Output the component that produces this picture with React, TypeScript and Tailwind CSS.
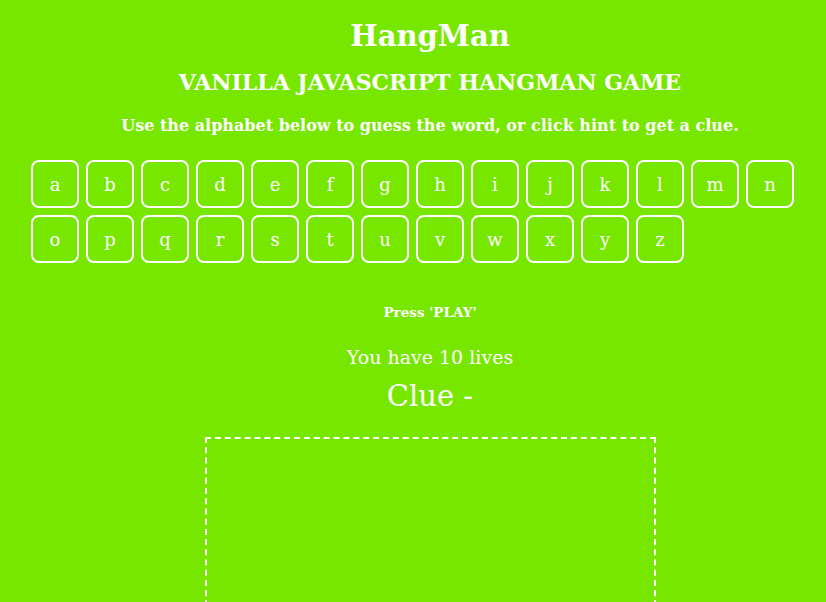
const letters = "abcdefghijklmnopqrstuvwxyz".split("");

export default function App() {
  return (
    <div className="min-h-[602px] h-[602px] overflow-hidden bg-[#78e700] text-white font-['DejaVu_Serif',serif]">
      <div className="pl-[34px] text-center">
        <h1 className="pt-[16px] text-[29px] leading-[40px] font-bold">HangMan</h1>
        <h2 className="mt-[11px] text-[22px] leading-[30px] font-bold">VANILLA JAVASCRIPT HANGMAN GAME</h2>
        <p className="mt-[18px] text-[16px] leading-[22px] font-bold">
          Use the alphabet below to guess the word, or click hint to get a clue.
        </p>
      </div>

      <ul className="mt-[23px] ml-[31px] flex w-[780px] flex-wrap gap-[7px]">
        {letters.map((l) => (
          <li
            key={l}
            className="flex h-[48px] w-[48px] list-none items-center justify-center rounded-[8px] border-2 border-white text-[18px]"
          >
            {l}
          </li>
        ))}
      </ul>

      <div className="pl-[34px] text-center">
        <p className="mt-[40px] text-[13.5px] leading-[18px] font-bold">Press 'PLAY'</p>
        <p className="mt-[23px] text-[19px] leading-[26px]">You have 10 lives</p>
        <p className="mt-[8px] text-[29px] leading-[36px]">Clue -</p>
      </div>

      <div className="ml-[205px] mt-[23px] h-[200px] w-[451px] border-2 border-dashed border-white" />
    </div>
  );
}
